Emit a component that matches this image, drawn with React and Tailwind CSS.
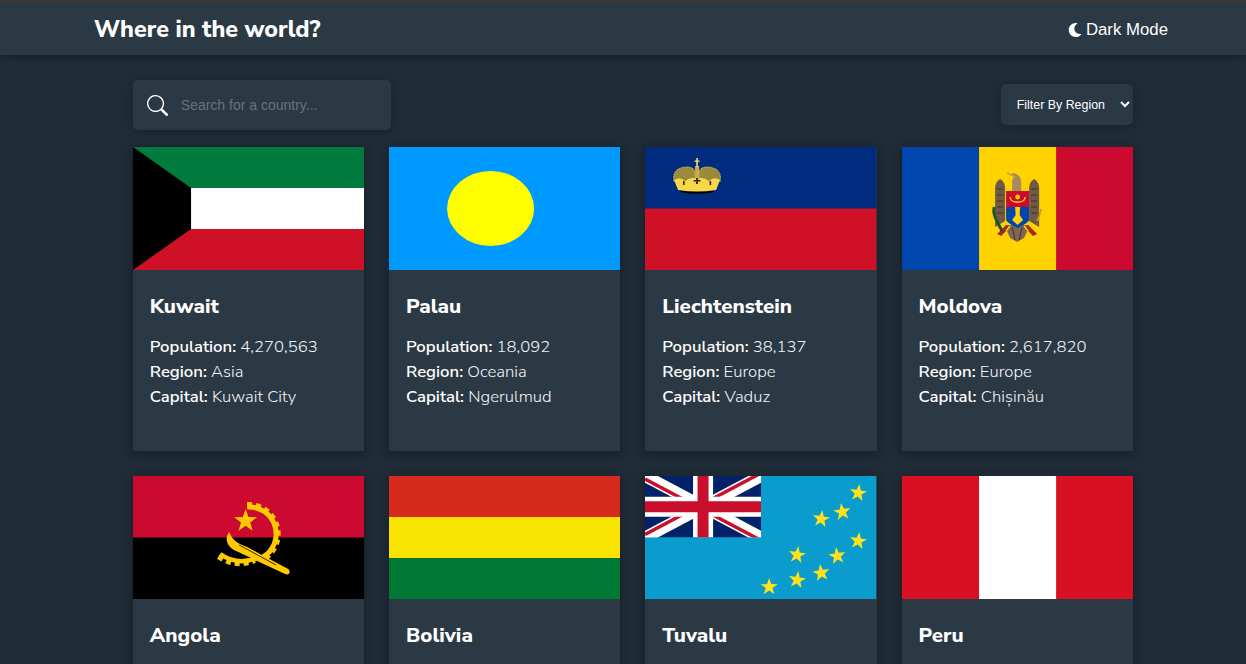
import { BsSearch } from "react-icons/bs";
import { FaMoon } from "react-icons/fa";

const starPoints = (cx, cy, r, rot = 0) => {
  const pts = [];
  for (let i = 0; i < 10; i++) {
    const rad = i % 2 === 0 ? r : r * 0.4;
    const a = ((-90 + rot + i * 36) * Math.PI) / 180;
    pts.push(`${(cx + rad * Math.cos(a)).toFixed(2)},${(cy + rad * Math.sin(a)).toFixed(2)}`);
  }
  return pts.join(" ");
};

const Flag = ({ children }) => (
  <svg viewBox="0 0 231 123" preserveAspectRatio="none" className="block w-full h-[123px]">
    {children}
  </svg>
);

const Stripes = ({ colors, vertical }) => {
  const size = (vertical ? 231 : 123) / colors.length;
  return colors.map((c, i) =>
    vertical ? (
      <rect key={i} x={i * size} y="0" width={size + 0.5} height="123" fill={c} />
    ) : (
      <rect key={i} x="0" y={i * size} width="231" height={size + 0.5} fill={c} />
    )
  );
};

const Kuwait = () => (
  <Flag>
    <Stripes colors={["#007a3d", "#ffffff", "#ce1126"]} />
    <polygon points="0,0 58,41 58,82 0,123" fill="#000" />
  </Flag>
);

const Palau = () => (
  <Flag>
    <rect width="231" height="123" fill="#0099ff" />
    <ellipse cx="101.5" cy="61.5" rx="43.5" ry="37.5" fill="#ffff00" />
  </Flag>
);

const Liechtenstein = () => (
  <Flag>
    <Stripes colors={["#002b7f", "#ce1126"]} />
    <ellipse cx="52" cy="44.5" rx="17" ry="2" fill="#000" />
    <path d="M29 34 C27 25 33 20 42 20 C47 20 50 22 50 27 V36 Z M75 34 C77 25 71 20 62 20 C57 20 54 22 54 27 V36 Z" fill="#9b8a3c" stroke="#e6cf6c" strokeWidth="1" strokeDasharray="1 1" />
    <rect x="50" y="19" width="4" height="16" fill="#c9ad4a" />
    <rect x="51.2" y="11" width="1.6" height="9" fill="#f0d870" />
    <rect x="49.5" y="13.5" width="5" height="1.4" fill="#f0d870" />
    <path d="M29 33 Q35 29 40 34 Q46 29 52 32 Q58 29 64 34 Q69 29 75 33 L71 43 Q52 46 33 43Z" fill="#f6d84a" />
    <path d="M51 31 h2 v6 h-2z M48.5 33 h7 v1.4 h-7z M38 34 h1.6 v4 h-1.6z M64.5 34 h1.6 v4 h-1.6z" fill="#3a2d10" />
  </Flag>
);

const Moldova = () => (
  <Flag>
    <Stripes colors={["#0046ae", "#ffd200", "#cc092f"]} vertical />
    <path d="M93 80 V41 C93 36 96 33 98 32 C100 33 103 36 103 41 V74Z M137 80 V41 C137 36 134 33 132 32 C130 33 127 36 127 41 V74Z" fill="#6e5a46" />
    <path d="M95 42 h6 M95 48 h6 M95 54 h6 M95 60 h6 M95 66 h6 M129 42 h6 M129 48 h6 M129 54 h6 M129 60 h6 M129 66 h6" stroke="#3f3225" strokeWidth="1" />
    <path d="M110 44 V35 C110 31 112 29 114 30 L109 27 L111 26 C115 27 119 29 119 35 V44Z" fill="#a58a64" />
    <path d="M105 26 L113 30" stroke="#c9a12f" strokeWidth="1.4" />
    <path d="M103 78 H127 L126 82 L122 91 L115 95 L108 91 L104 82Z" fill="#7f6650" />
    <path d="M110 80 L113 93 M120 80 L117 93" stroke="#3f3225" strokeWidth="1" />
    <path d="M95 87 L104 78 L107 81 L99 89Z" fill="#a22b24" />
    <path d="M135 87 L126 78 L123 81 L131 89Z" fill="#a22b24" />
    <path d="M104 84 L108 79 M126 84 L122 79" stroke="#ffd200" strokeWidth="1.4" />
    <path d="M104 44 H127 V60 H104Z" fill="#cc092f" />
    <path d="M104 60 H127 V72 C127 76 120 78 115.5 81 C111 78 104 76 104 72Z" fill="#0046ae" />
    <path d="M108 50 C108 57 123 57 123 50" fill="none" stroke="#ffd200" strokeWidth="1.4" />
    <circle cx="115.5" cy="50" r="2.4" fill="#ffd200" />
    <path d="M113 60 H118 L117.5 68 L121 73 L115.5 78 L110 73 L113.5 68Z" fill="#ffd200" />
    <path d="M92 60 C90 68 96 76 100 84" fill="none" stroke="#24512c" strokeWidth="3" />
    <path d="M139 62 C138 66 137 70 135 74" fill="none" stroke="#c79b22" strokeWidth="1.6" />
  </Flag>
);

const Angola = () => (
  <Flag>
    <Stripes colors={["#cc092f", "#000000"]} />
    <path d="M114 31 A27 27 0 0 1 130 81" fill="none" stroke="#ffcb00" strokeWidth="5" />
    <path d="M114 28 A30 30 0 0 1 132 83" fill="none" stroke="#ffcb00" strokeWidth="4" strokeDasharray="5 4" />
    <path d="M87 78 Q104 90 124 82" fill="none" stroke="#ffcb00" strokeWidth="4.5" />
    <path d="M85 81 Q103 93 122 85" fill="none" stroke="#ffcb00" strokeWidth="4" strokeDasharray="5 4" />
    <polygon points={starPoints(112.5, 45, 12)} fill="#ffcb00" />
    <path d="M96 56 C91 63 94 71 103 75 L152 98 C156 100 158 95 155 93 L114 71 C105 68 99 64 96 56Z" fill="#ffcb00" />
    <path d="M106 69 L143 89" stroke="#000" strokeWidth="0.8" />
  </Flag>
);

const Bolivia = () => (
  <Flag>
    <Stripes colors={["#d52b1e", "#f9e300", "#007934"]} />
  </Flag>
);

const tuvaluStars = [
  [213, 17, 8],
  [197, 36, -8],
  [176, 43, 8],
  [213, 65, 8],
  [192, 80, -8],
  [152, 79, 8],
  [176, 97, -8],
  [152, 104, 8],
  [124, 111, 0],
];

const Tuvalu = () => (
  <Flag>
    <rect width="231" height="123" fill="#0a9ccc" />
    <svg x="0" y="0" width="116" height="61.5" viewBox="0 0 116 61.5">
      <rect width="116" height="61.5" fill="#012169" />
      <path d="M0 0 L116 61.5 M116 0 L0 61.5" stroke="#fff" strokeWidth="12" />
      <path d="M0 0 L58 30.75 M116 61.5 L58 30.75" stroke="#c8102e" strokeWidth="3.5" transform="translate(0 3)" />
      <path d="M116 0 L58 30.75 M0 61.5 L58 30.75" stroke="#c8102e" strokeWidth="3.5" transform="translate(0 -3)" />
      <path d="M58 0 V61.5 M0 30.75 H116" stroke="#fff" strokeWidth="20" />
      <path d="M58 0 V61.5 M0 30.75 H116" stroke="#c8102e" strokeWidth="11" />
    </svg>
    {tuvaluStars.map(([x, y, rot]) => (
      <polygon key={`${x}-${y}`} points={starPoints(x, y, 9, rot)} fill="#fee11a" />
    ))}
  </Flag>
);

const Peru = () => (
  <Flag>
    <Stripes colors={["#d91023", "#ffffff", "#d91023"]} vertical />
  </Flag>
);

const countries = [
  { name: "Kuwait", population: "4,270,563", region: "Asia", capital: "Kuwait City", flag: <Kuwait /> },
  { name: "Palau", population: "18,092", region: "Oceania", capital: "Ngerulmud", flag: <Palau /> },
  { name: "Liechtenstein", population: "38,137", region: "Europe", capital: "Vaduz", flag: <Liechtenstein /> },
  { name: "Moldova", population: "2,617,820", region: "Europe", capital: "Chișinău", flag: <Moldova /> },
  { name: "Angola", population: "32,866,268", region: "Africa", capital: "Luanda", flag: <Angola /> },
  { name: "Bolivia", population: "11,673,029", region: "Americas", capital: "Sucre", flag: <Bolivia /> },
  { name: "Tuvalu", population: "11,792", region: "Oceania", capital: "Funafuti", flag: <Tuvalu /> },
  { name: "Peru", population: "32,971,846", region: "Americas", capital: "Lima", flag: <Peru /> },
];

const Detail = ({ label, value }) => (
  <p className="text-[16.7px] leading-[25px] font-light text-[#f2f4f5]">
    <span className="font-semibold text-white">{label}:</span> {value}
  </p>
);

const CountryCard = ({ country }) => (
  <article className="h-[304px] bg-[#2b3945] shadow-[0_2px_8px_2px_rgba(0,0,0,0.25)] overflow-hidden">
    {country.flag}
    <div className="px-[17px] pt-[21px]">
      <h2 className="text-[20.6px] leading-[30px] font-extrabold text-white">{country.name}</h2>
      <div className="mt-[13px]">
        <Detail label="Population" value={country.population} />
        <Detail label="Region" value={country.region} />
        <Detail label="Capital" value={country.capital} />
      </div>
    </div>
  </article>
);

const App = () => {
  return (
    <div className="h-screen overflow-hidden bg-[#202c37] font-['Nunito_Sans','Lato','Open_Sans',sans-serif] text-white">
      <div className="h-[3px] bg-[#3c3c3c]" />
      <header className="relative flex h-[52px] items-center justify-between bg-[#2b3945] pl-[94px] pr-[78px] shadow-[0_2px_8px_rgba(0,0,0,0.3)]">
        <h1 className="text-[23.3px] font-extrabold">Where in the world?</h1>
        <div className="mt-[1px] flex items-center gap-[4px] font-['Liberation_Sans',sans-serif] text-[16.8px]">
          <FaMoon size={14} />
          <span>Dark Mode</span>
        </div>
      </header>

      <main className="ml-[132.8px] w-[1000px] pt-[25px]">
        <div className="flex h-[50px] items-center justify-between">
          <label className="flex h-[50px] w-[258px] items-center gap-[13px] rounded-[5px] bg-[#2b3945] pl-[14px] shadow-[0_2px_8px_rgba(0,0,0,0.25)]">
            <BsSearch size={21} className="text-white" />
            <input
              type="text"
              placeholder="Search for a country..."
              className="w-[190px] bg-transparent font-['Liberation_Sans',sans-serif] text-[14px] text-white outline-none placeholder:text-[#68727a]"
            />
          </label>
          <select className="mb-[1px] h-[41px] w-[132px] rounded-[5px] bg-[#2b3945] pl-[12px] font-['Liberation_Sans',sans-serif] text-[12.4px] text-white shadow-[0_2px_8px_rgba(0,0,0,0.25)] outline-none">
            <option>Filter By Region</option>
            <option>Africa</option>
            <option>Americas</option>
            <option>Asia</option>
            <option>Europe</option>
            <option>Oceania</option>
          </select>
        </div>

        <section className="mt-[17px] grid grid-cols-4 gap-[25px]">
          {countries.map((country) => (
            <CountryCard key={country.name} country={country} />
          ))}
        </section>
      </main>
    </div>
  );
};

export default App;
